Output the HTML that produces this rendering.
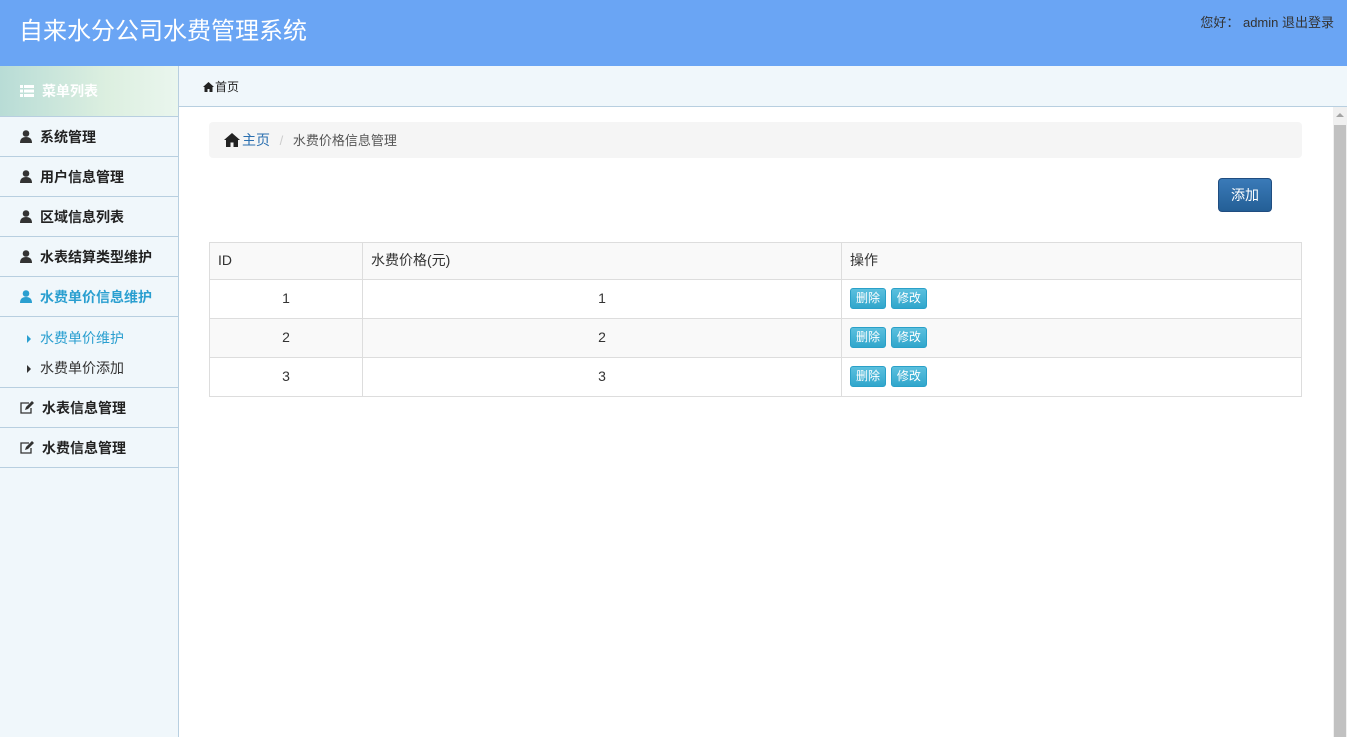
<!DOCTYPE html>
<html><head><meta charset="utf-8"><style>
*{margin:0;padding:0;box-sizing:border-box}
body{width:1347px;height:737px;overflow:hidden;font-family:"Liberation Sans","Noto Sans CJK SC",sans-serif;font-size:14px;color:#333;background:#fff;position:relative}
.top{position:absolute;left:0;top:0;width:1347px;height:66px;background:#6aa5f4}
.top h1{position:absolute;left:19px;top:11px;font-size:24px;font-weight:normal;color:#fff}
.top .u{position:absolute;right:13px;top:12px;font-size:13px;color:#333}
.side{position:absolute;left:0;top:66px;width:179px;height:671px;background:#f0f7fb;border-right:1px solid #b8cfe0}
.sh{height:51px;background:linear-gradient(90deg,#b8dcd6,#dcefe0 60%,#eaf6ee);border-bottom:1px solid #b8cfe0;color:#fff;font-weight:bold;font-size:14px;padding:15px 0 0 20px}
.it{height:40px;border-bottom:1px solid #b8cfe0;font-weight:bold;font-size:14px;padding:10px 0 0 20px;color:#222}
.it.a{color:#2a9fd0}
.sub{height:71px;border-bottom:1px solid #b8cfe0;padding-top:7px}
.sub div{height:30px;padding:4px 0 0 27px;font-size:14px;color:#333}
.sub div.a{color:#2a9fd0}
.tri{display:inline-block;width:0;height:0;border-left:4px solid currentColor;border-top:4px solid transparent;border-bottom:4px solid transparent;margin-right:9px}
.tabs{position:absolute;left:179px;top:66px;width:1168px;height:41px;background:#f0f7fb;border-bottom:1px solid #b8cfe0}
.tabs span{position:absolute;left:24px;top:12px;font-size:12px;color:#222}
.bc{position:absolute;left:209px;top:122px;width:1093px;height:36px;background:#f5f5f5;border-radius:4px;padding:8px 0 0 15px;font-size:13px;color:#555}
.bc a{color:#2a6fb0;font-size:14px}
.btn{position:absolute;left:1218px;top:178px;width:54px;height:34px;background:linear-gradient(#3a7ab8,#245f96);border:1px solid #204d80;border-radius:4px;color:#fff;font-size:14px;text-align:center;line-height:32px}
table{position:absolute;left:209px;top:242px;width:1093px;border-collapse:collapse;font-size:14px}
td,th{border:1px solid #ddd;height:39px;font-weight:normal;padding-bottom:2px}
th{text-align:left;padding-left:8px;background:#f9f9f9;height:37px}
tr:nth-child(odd) td{background:#f9f9f9}
tr:nth-child(even) td{background:#fff}
td.c{text-align:center}
td.o{padding-left:8px}
.sb{display:inline-block;width:36px;height:21px;background:linear-gradient(#5bc0de,#31a6cc);border:1px solid #2aa0c8;border-radius:3px;color:#fff;font-size:12px;text-align:center;line-height:19px;margin-right:1px;vertical-align:middle}
.scr{position:absolute;left:1333px;top:107px;width:14px;height:630px;background:#f0f0f0}
.scr i{position:absolute;left:1px;top:18px;width:12px;height:612px;background:#c1c1c1}
.scr b{position:absolute;left:3px;top:6px;width:0;height:0;border-left:4px solid transparent;border-right:4px solid transparent;border-bottom:4px solid #a3a3a3}
svg{vertical-align:-1px;margin-right:8px}
</style></head><body>
<div class="top"><h1>自来水分公司水费管理系统</h1><div class="u">您好： admin 退出登录</div></div>
<div class="side">
<div class="sh"><svg width="14" height="12" viewBox="0 0 14 12"><path fill="#fff" d="M0 0h3v3H0zM4 0h10v3H4zM0 4.5h3v3H0zM4 4.5h10v3H4zM0 9h3v3H0zM4 9h10v3H4z"/></svg>菜单列表</div>
<div class="it"><svg width="12" height="13" viewBox="0 0 12 13"><circle cx="6" cy="3.5" r="3.3" fill="#333"/><path fill="#333" d="M0 13c0-4 2-6 6-6s6 2 6 6z"/></svg>系统管理</div>
<div class="it"><svg width="12" height="13" viewBox="0 0 12 13"><circle cx="6" cy="3.5" r="3.3" fill="#333"/><path fill="#333" d="M0 13c0-4 2-6 6-6s6 2 6 6z"/></svg>用户信息管理</div>
<div class="it"><svg width="12" height="13" viewBox="0 0 12 13"><circle cx="6" cy="3.5" r="3.3" fill="#333"/><path fill="#333" d="M0 13c0-4 2-6 6-6s6 2 6 6z"/></svg>区域信息列表</div>
<div class="it"><svg width="12" height="13" viewBox="0 0 12 13"><circle cx="6" cy="3.5" r="3.3" fill="#333"/><path fill="#333" d="M0 13c0-4 2-6 6-6s6 2 6 6z"/></svg>水表结算类型维护</div>
<div class="it a"><svg width="12" height="13" viewBox="0 0 12 13"><circle cx="6" cy="3.5" r="3.3" fill="#2a9fd0"/><path fill="#2a9fd0" d="M0 13c0-4 2-6 6-6s6 2 6 6z"/></svg>水费单价信息维护</div>
<div class="sub"><div class="a"><span class="tri"></span>水费单价维护</div><div><span class="tri"></span>水费单价添加</div></div>
<div class="it"><svg width="14" height="13" viewBox="0 0 14 13"><path fill="none" stroke="#333" stroke-width="1.3" d="M9 2H1v10h10V7"/><path fill="#333" d="M5 9l1-3 6-6 2 2-6 6z"/></svg>水表信息管理</div>
<div class="it"><svg width="14" height="13" viewBox="0 0 14 13"><path fill="none" stroke="#333" stroke-width="1.3" d="M9 2H1v10h10V7"/><path fill="#333" d="M5 9l1-3 6-6 2 2-6 6z"/></svg>水费信息管理</div>
</div>
<div class="tabs"><span><svg width="11" height="10" viewBox="0 0 11 10" style="margin-right:1px"><path fill="#222" d="M5.5 0L0 5h1.5v5h3V7h2v3h3V5H11z"/></svg>首页</span></div>
<div class="bc"><svg width="16" height="14" viewBox="0 0 16 14" style="margin-right:2px;vertical-align:-2px"><path fill="#222" d="M8 0L0 7h2v7h4.5V9.5h3V14H14V7h2z"/></svg><a>主页</a> <span style="color:#ccc;margin:0 6px">/</span> 水费价格信息管理</div>
<div class="btn">添加</div>
<table>
<tr><th style="width:153px">ID</th><th style="width:479px">水费价格(元)</th><th>操作</th></tr>
<tr><td class="c">1</td><td class="c">1</td><td class="o"><span class="sb">删除</span> <span class="sb">修改</span></td></tr>
<tr><td class="c">2</td><td class="c">2</td><td class="o"><span class="sb">删除</span> <span class="sb">修改</span></td></tr>
<tr><td class="c">3</td><td class="c">3</td><td class="o"><span class="sb">删除</span> <span class="sb">修改</span></td></tr>
</table>
<div class="scr"><b></b><i></i></div>
</body></html>
